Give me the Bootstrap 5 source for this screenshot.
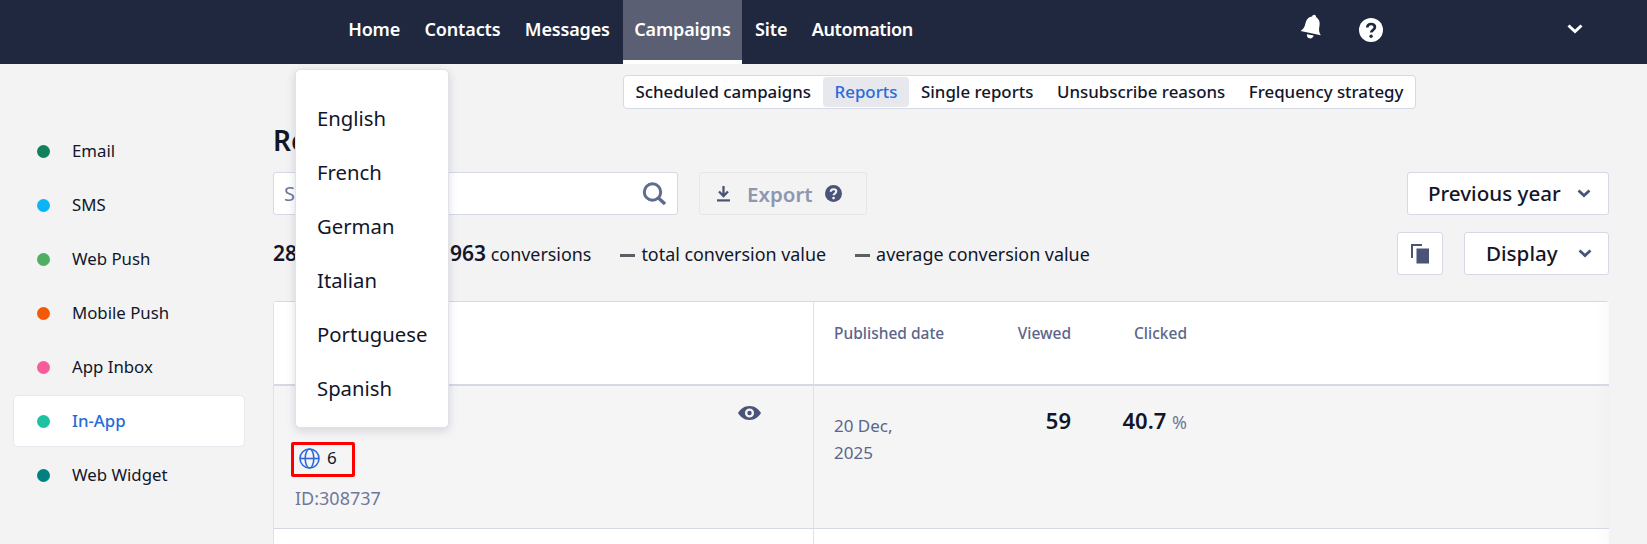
<!DOCTYPE html>
<html lang="en">
<head>
<meta charset="utf-8">
<title>Reports</title>
<link href="https://cdn.jsdelivr.net/npm/bootstrap@5.3.0/dist/css/bootstrap.min.css" rel="stylesheet">
<style>
html,body{height:544px;overflow:hidden}
body{background:#f3f3f3;font-family:"Noto Sans","Liberation Sans",sans-serif;color:#12162a;position:relative}
.topbar{height:64px;background:#20283f;padding-left:336px;padding-right:64px}
.topnav{height:64px}
.topnav .nav-link{color:#fff;font-weight:600;font-size:18px;padding:0 12.200px;height:64px;line-height:58px;letter-spacing:-.15px}
.topnav .nav-item:last-child .nav-link{letter-spacing:-.35px}
.topnav .on-tab{background:#5a5f73;border-bottom:4px solid #fff;padding:0 11.200px;margin:0 1px}
.top-icons{margin-left:auto}
.subtabs{margin:11px 0 0 623px;height:34px;width:793px;background:#fff;border:1px solid #d5d8e5;border-radius:4px;padding:1px 0;justify-content:space-between}
.subtabs a{font-size:16.850px;font-weight:500;color:#12162a;text-decoration:none;line-height:30px;padding:0 11.500px;border-radius:4px;white-space:nowrap}
.subtabs a.cur{background:#e6e8ee;color:#2a6ad9}
.lang-menu{top:69px;left:295px;width:154px;min-width:0;height:359px;padding:21px 0;border:1px solid #e0e2ea;border-radius:5px;box-shadow:0 3px 10px rgba(60,70,100,.18);z-index:10}
.lang-menu .dropdown-item{font-size:20.300px;height:54px;line-height:54px;padding:0 0 0 21px;color:#12162a}
.side{width:273px;flex:none;padding:16px 0 0 13px}
.side-item{width:232px;height:52px;margin:0 0 2px;display:flex;align-items:center;padding-left:23px;font-size:16.800px;border:1px solid transparent;border-radius:5px}
.side-item.cur{background:#fff;border-color:#e6e8ee;color:#2a6ad9;font-weight:500}
.dot{width:13px;height:13px;border-radius:50%;margin-right:22px;flex:none}
.maincol{width:1336px;padding-top:15px}
.maincol h1{font-size:28px;font-weight:600;line-height:32px;margin:0}
.toolbar{margin-top:16px;height:43px}
.search{width:405px;height:43px;background:#fff;border:1px solid #d5d8e5;border-radius:3px;padding:0 10px;font-size:20px;color:#6f7899}
.exportbtn{margin-left:21px;width:168px;height:43px;border:1px solid #e5e6ec;border-radius:3px;padding-left:17px;color:#8f96b0;font-weight:600;font-size:20.500px}
.export-txt{margin-left:17px;padding-top:2px}
.whitebtn{background:#fff;border:1px solid #d5d8e5;border-radius:3px;height:43px;font-size:20.600px;font-weight:500;color:#12162a}
.prevbtn{width:202px;margin-left:auto;padding-left:20px}
.statsrow{margin-top:17px;height:43px;font-size:17.900px}
.statsrow b{font-size:21px;font-weight:600}
.gap-hidden{margin-left:153px}
.dash{display:inline-block;width:15px;height:3px;background:#5b5e66;vertical-align:middle;margin:0 6px 0 29px}
.copybtn{width:46px;margin-left:auto;justify-content:center}
.dispbtn{width:145px;margin-left:21px;padding-left:21px}
.grid-tbl{margin-top:26px;border-top:1px solid #d5d8e5;border-left:1px solid #dfe1ea;border-radius:4px 4px 0 0;background:#fff}
.tr-head{height:84px;border-bottom:2px solid #d5d8e5;background:#fff linear-gradient(to left,rgba(0,0,0,.02),transparent 14px)}
.tr-body{height:143px;background:#f5f5f6 linear-gradient(to left,rgba(0,0,0,.015),transparent 14px);border-bottom:1px solid #d5d8e5}
.tr-next{height:30px;background:#fff linear-gradient(to left,rgba(0,0,0,.02),transparent 14px)}
.cell-a{width:540px;flex:none;border-right:1px solid #dfe1ea}
.metric{padding-left:20px;display:grid;grid-template-columns:130px 107px 116px}
.metric-h{font-size:15.500px;font-weight:500;color:#5c6689;padding-top:21px;line-height:20px}
.metric-h>div+div,.metric-v>div+div{text-align:right}
.date-txt{color:#5c6689;font-size:17px;line-height:27px;padding-top:26px}
.num-txt{font-size:22px;font-weight:600;line-height:26px;padding-top:21px;white-space:nowrap}
.pct{font-size:18px;font-weight:400;color:#6f7899}
.cell-a.body-a{padding:20px 52px 0 17px}
.eye-line{height:13px}
.langbox{width:64px;height:35px;margin-top:23px;border:3px solid #f00;border-radius:2px;padding:0 0 3px 5px;font-size:17px;gap:7px}
.idline{margin:9px 0 0 4px;font-size:18px;color:#6f7899;line-height:24px}
</style>
</head>
<body>
<nav class="topbar d-flex align-items-center">
  <ul class="nav topnav flex-nowrap">
    <li class="nav-item"><a class="nav-link" href="#">Home</a></li>
    <li class="nav-item"><a class="nav-link" href="#">Contacts</a></li>
    <li class="nav-item"><a class="nav-link" href="#">Messages</a></li>
    <li class="nav-item"><a class="nav-link on-tab" href="#">Campaigns</a></li>
    <li class="nav-item"><a class="nav-link" href="#">Site</a></li>
    <li class="nav-item"><a class="nav-link" href="#">Automation</a></li>
  </ul>
  <div class="top-icons d-flex align-items-center">
    <svg width="24" height="29" viewBox="0 0 22 27" style="margin-top:-9px"><g fill="#fff" transform="rotate(12 11 13)"><path d="M11 1.500c1.200 0 1.900.9 1.900 1.900 3.300 1 4.700 4 4.700 7.300 0 4 1 6.100 3 8.100H1.400c2-2 3-4.100 3-8.100 0-3.300 1.400-6.300 4.700-7.300C9.100 2.400 9.800 1.500 11 1.500z"/><path d="M7.800 20.500h6.400c0 1.900-1.400 3.300-3.200 3.300s-3.200-1.400-3.200-3.300z"/></g></svg>
    <svg width="24" height="24" viewBox="0 0 24 24" style="margin-left:35px;margin-top:-5px"><circle cx="12" cy="12" r="12" fill="#fff"/><path d="M8.200 9.500c.2-2.300 1.800-3.500 3.900-3.500 2.200 0 3.800 1.300 3.800 3.200 0 2.900-3.700 2.800-3.700 5.300" fill="none" stroke="#20283f" stroke-width="2.700"/><circle cx="12.100" cy="18.300" r="1.700" fill="#20283f"/></svg>
    <svg width="16" height="10" viewBox="0 0 16 10" style="margin-left:184px;margin-top:-6px"><path d="M1.500 1.500 8 7.500l6.500-6" fill="none" stroke="#fff" stroke-width="3"/></svg>
  </div>
</nav>

<div class="subtabs d-flex align-items-center">
  <a href="#">Scheduled campaigns</a>
  <a href="#" class="cur">Reports</a>
  <a href="#">Single reports</a>
  <a href="#">Unsubscribe reasons</a>
  <a href="#">Frequency strategy</a>
</div>

<ul class="dropdown-menu show lang-menu position-absolute list-unstyled m-0">
  <li><a class="dropdown-item" href="#">English</a></li>
  <li><a class="dropdown-item" href="#">French</a></li>
  <li><a class="dropdown-item" href="#">German</a></li>
  <li><a class="dropdown-item" href="#">Italian</a></li>
  <li><a class="dropdown-item" href="#">Portuguese</a></li>
  <li><a class="dropdown-item" href="#">Spanish</a></li>
</ul>

<div class="d-flex">
  <aside class="side">
    <div class="side-item"><span class="dot" style="background:#12805c"></span>Email</div>
    <div class="side-item"><span class="dot" style="background:#0db4f5"></span>SMS</div>
    <div class="side-item"><span class="dot" style="background:#4fae62"></span>Web Push</div>
    <div class="side-item"><span class="dot" style="background:#f25a0a"></span>Mobile Push</div>
    <div class="side-item"><span class="dot" style="background:#f75e99"></span>App Inbox</div>
    <div class="side-item cur"><span class="dot" style="background:#1fc1a3"></span>In-App</div>
    <div class="side-item"><span class="dot" style="background:#00807f"></span>Web Widget</div>
  </aside>
  <main class="maincol">
    <h1>Reports</h1>
    <div class="toolbar d-flex align-items-center">
      <div class="search d-flex align-items-center justify-content-between">
        <span>S</span>
        <svg width="25" height="23" viewBox="0 0 25 23"><circle cx="10.500" cy="10" r="8.200" fill="none" stroke="#5f6b8f" stroke-width="3"/><path d="M16.500 16l6.500 6" stroke="#5f6b8f" stroke-width="3.400" fill="none"/></svg>
      </div>
      <div class="exportbtn d-flex align-items-center">
        <svg width="13" height="16" viewBox="0 0 13 16"><path d="M6.500 0v9M2 5.500l4.500 4.500 4.500-4.500" fill="none" stroke="#4a5378" stroke-width="2.300"/><rect y="13.300" width="13" height="2.200" fill="#4a5378"/></svg>
        <span class="export-txt">Export</span>
        <svg width="17" height="17" viewBox="0 0 24 24" style="margin-left:12px"><circle cx="12" cy="12" r="12" fill="#4a5378"/><path d="M8 9.500c.2-2.300 1.900-3.500 4-3.500s3.900 1.300 3.900 3.200c0 2.900-3.800 2.800-3.800 5.300" fill="none" stroke="#f3f3f3" stroke-width="3"/><circle cx="12.100" cy="18.500" r="1.900" fill="#f3f3f3"/></svg>
      </div>
      <div class="whitebtn prevbtn d-flex align-items-center">Previous year
        <svg class="ms-auto" width="14" height="9" viewBox="0 0 14 9" style="margin-right:17px"><path d="M1.500 1.500 7 6.500l5.500-5" fill="none" stroke="#4a5378" stroke-width="2.800"/></svg>
      </div>
    </div>
    <div class="statsrow d-flex align-items-center">
      <span class="text-nowrap"><b>28</b><b class="gap-hidden">963</b> conversions<i class="dash"></i>total conversion value<i class="dash"></i>average conversion value</span>
      <div class="whitebtn copybtn d-flex align-items-center">
        <svg width="18" height="20" viewBox="0 0 18 20"><path d="M1 14V1h10" fill="none" stroke="#4a5378" stroke-width="2"/><rect x="5.500" y="4.500" width="12.500" height="15" fill="#4a5378"/></svg>
      </div>
      <div class="whitebtn dispbtn d-flex align-items-center">Display
        <svg class="ms-auto" width="14" height="9" viewBox="0 0 14 9" style="margin-right:16px"><path d="M1.500 1.500 7 6.500l5.500-5" fill="none" stroke="#4a5378" stroke-width="2.800"/></svg>
      </div>
    </div>
    <div class="grid-tbl">
      <div class="tr-head d-flex">
        <div class="cell-a"></div>
        <div class="metric metric-h"><div>Published date</div><div>Viewed</div><div>Clicked</div></div>
      </div>
      <div class="tr-body d-flex">
        <div class="cell-a body-a">
          <div class="eye-line d-flex justify-content-end">
            <svg width="23" height="14" viewBox="0 0 23 14"><path fill-rule="evenodd" fill="#4a5378" d="M11.500 0C17 0 21 3.500 23 7c-2 3.500-6 7-11.500 7S2 10.500 0 7c2-3.500 6-7 11.500-7zm0 2.400a4.600 4.600 0 1 0 0 9.200 4.600 4.600 0 0 0 0-9.200zm0 2.400a2.200 2.200 0 1 1 0 4.400 2.200 2.200 0 0 1 0-4.400z"/></svg>
          </div>
          <div class="langbox d-flex align-items-center">
            <svg width="21" height="21" viewBox="0 0 21 21" fill="none" stroke="#2a6ad9" stroke-width="1.600"><circle cx="10.500" cy="10.500" r="9.500"/><ellipse cx="10.500" cy="10.500" rx="4.300" ry="9.500"/><path d="M1 10.500h19"/></svg>
            <span>6</span>
          </div>
          <div class="idline">ID:308737</div>
        </div>
        <div class="metric metric-v">
          <div class="date-txt">20 Dec,<br>2025</div>
          <div class="num-txt">59</div>
          <div class="num-txt">40.7 <span class="pct">%</span></div>
        </div>
      </div>
      <div class="tr-next d-flex"><div class="cell-a"></div></div>
    </div>
  </main>
</div>
<script src="https://cdn.jsdelivr.net/npm/bootstrap@5.3.0/dist/js/bootstrap.bundle.min.js"></script>
</body>
</html>
